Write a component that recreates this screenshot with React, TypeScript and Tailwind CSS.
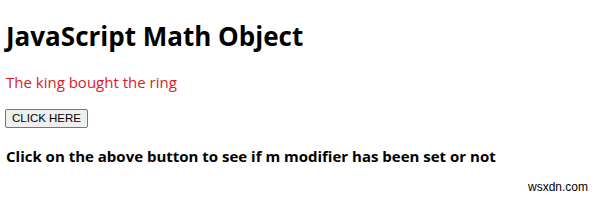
import React from 'react';

export default function App() {
  return (
    <div className="relative w-[600px] h-[202px] bg-white text-black font-['Open_Sans',sans-serif] px-[6px] overflow-hidden">
      <h1 className="pt-[20px] text-[26px] leading-[32px] font-bold">JavaScript Math Object</h1>
      <p className="mt-[20px] text-[15px] leading-[20px] text-[#e0181f]">The king bought the ring</p>
      <div className="mt-[12px]">
        <button className="-ml-px h-[19px] px-[6px] border border-[#767676] bg-[#efefef] rounded-[2px] text-[11.5px] leading-[16px] font-['Liberation_Sans',sans-serif]">
          CLICK HERE
        </button>
      </div>
      <h3 className="mt-[17px] text-[15px] leading-[22px] font-bold">
        Click on the above button to see if m modifier has been set or not
      </h3>
      <span className="absolute right-[12px] bottom-[6px] text-[12px] font-['Liberation_Sans',sans-serif]">wsxdn.com</span>
    </div>
  );
}
